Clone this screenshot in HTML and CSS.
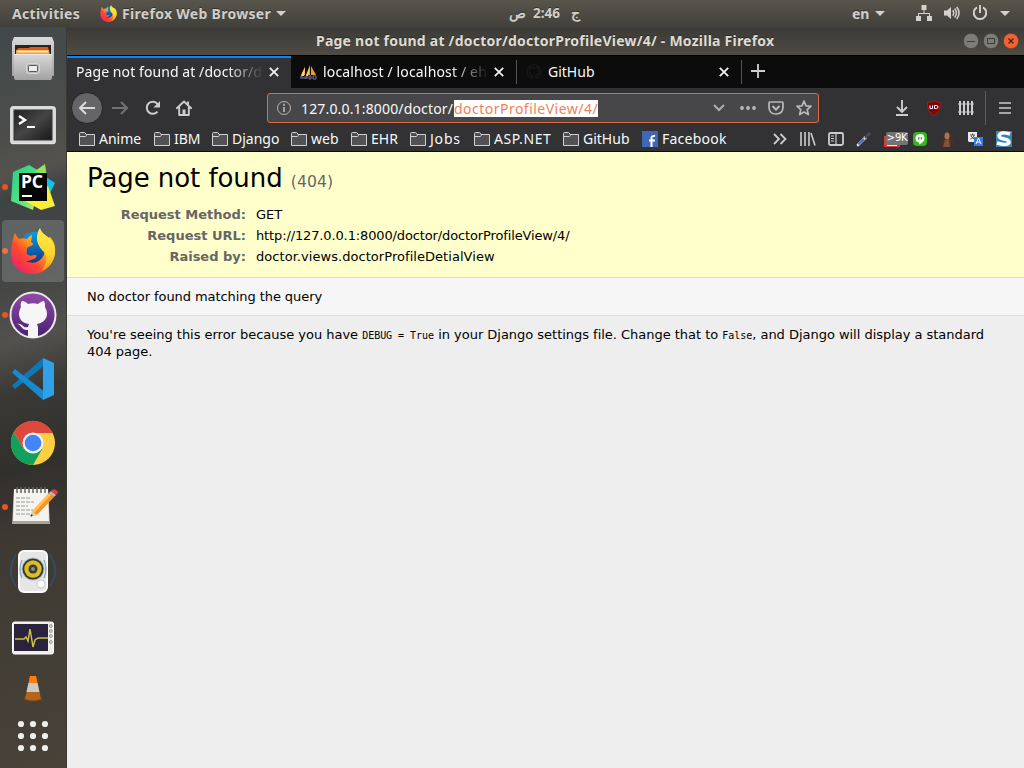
FILE: index.html
```html
<!DOCTYPE html>
<html lang="en">
<head>
<meta charset="utf-8">
<title>Page not found at /doctor/doctorProfileView/4/</title>
<link rel="stylesheet" href="styles.css">
</head>
<body>
<svg class="defs" width="0" height="0">
  <defs>
    <symbol id="folder" viewBox="0 0 16 16"><path d="M.5 14.500V2.500q0-1 1-1h4q1 0 1.500 2h8.500v11zM.5 5.500h6l1-1.500" fill="#525254" stroke="#d0d0d1"/></symbol>
    <symbol id="close" viewBox="0 0 10 10"><path d="M.8.8l8.400 8.400M9.200.8L.8 9.200" stroke="#f5f5f5" stroke-width="1.700" fill="none"/></symbol>
    <symbol id="caret" viewBox="0 0 10 5"><path d="M0 0h10L5 5z" fill="#d3d2ce"/></symbol>
    <linearGradient id="ffBody" x1="1" y1="0" x2="0" y2="1"><stop offset="0" stop-color="#ffe226"/><stop offset=".35" stop-color="#ffad18"/><stop offset=".6" stop-color="#ff4b2f"/><stop offset="1" stop-color="#e9107c"/></linearGradient>
    <linearGradient id="ffTail" x1="0" y1="0" x2="0" y2="1"><stop offset="0" stop-color="#fff04a"/><stop offset=".6" stop-color="#ffd52a"/><stop offset="1" stop-color="#ff9a1e"/></linearGradient>
    <linearGradient id="ffGlobe" x1="0" y1="0" x2="0" y2="1"><stop offset="0" stop-color="#079de8"/><stop offset="1" stop-color="#173386"/></linearGradient>
    <linearGradient id="metal" x1="0" y1="0" x2="0" y2="1"><stop offset="0" stop-color="#d9d9d9"/><stop offset="1" stop-color="#a2a2a2"/></linearGradient>
    <linearGradient id="screen" x1="0" y1="0" x2="1" y2="1"><stop offset="0" stop-color="#222"/><stop offset=".5" stop-color="#454545"/><stop offset="1" stop-color="#171717"/></linearGradient>
    <linearGradient id="ghBg" x1="0" y1="0" x2="0" y2="1"><stop offset="0" stop-color="#914ba8"/><stop offset="1" stop-color="#49216f"/></linearGradient>
    <linearGradient id="pcBg" x1="0" y1="0" x2="1" y2="1"><stop offset="0" stop-color="#20d18c"/><stop offset=".5" stop-color="#53df83"/><stop offset="1" stop-color="#e7f04c"/></linearGradient>
    <symbol id="firefox" viewBox="0 0 46 46">
      <circle cx="25" cy="20" r="16" fill="url(#ffGlobe)"/>
      <path d="M5 5c1 2 2 4 4 6 3-1 5-1 8 0 1-2 3-3 5-4 0 3-1 5-1 7 1 1 2 1 2 2 0 2-6 2-6 5 0 2-1 4 0 5 3 3 6 1 9 1 1 1 0 3-2 4-3 1-5 2-8 2 5 3 12 2 16-3 4-5 3-12 0-17l8-4c6 6 6 13 4 20-3 10-11 17-21 17C10 46 1 38 1 26 1 20 2 12 5 5z" fill="url(#ffBody)"/>
      <path d="M30 0c1 4 4 6 8 9 9 8 9 20 2 28-3 3-6 5-9 6 6-7 7-14 3-19-4-4-7-8-7-14 0-4 1-7 3-10z" fill="url(#ffTail)"/>
    </symbol>
  </defs>
</svg>
<div class="desktop">
  <header class="topbar">
    <span class="activities">Activities</span>
    <span class="app-menu"><svg width="17" height="17"><use href="#firefox"/></svg><b>Firefox Web Browser</b><svg class="car" width="10" height="5"><use href="#caret"/></svg></span>
    <span class="clock"><span>ص</span><span>2:46</span><span class="day">ج</span></span>
    <span class="lang">en</span><svg class="lang-car" width="10" height="5"><use href="#caret"/></svg>
    <span class="status">
      <svg width="16" height="16" viewBox="0 0 16 16" fill="#d3d2ce"><path d="M5.500 0h5v5h-5zM0 11h5v5H0zM11 11h5v5h-5zM7.500 5h1v3h5.500v3h-1V9H3v2H2V8h5.500z"/></svg>
      <svg width="16" height="16" viewBox="0 0 16 16"><path d="M0 5.500h3L7 2v12L3 10.500H0z" fill="#d3d2ce"/><path d="M8.700 5.300q2 2.700 0 5.400M10.700 3.500q3.500 4.500 0 9M12.700 2q4.700 6 0 12" fill="none" stroke="#d3d2ce" stroke-width="1.500"/></svg>
      <svg width="16" height="16" viewBox="0 0 16 16"><path d="M5 2.400a6.200 6.200 0 1 0 6 0M8 0v8" fill="none" stroke="#d3d2ce" stroke-width="1.900"/></svg>
      <svg width="10" height="5"><use href="#caret"/></svg>
    </span>
  </header>
  <div class="workspace">
    <nav class="dock">
      <div class="app"><svg width="46" height="46" viewBox="0 0 46 46"><path d="M4 1h38l2 5v34H2V6z" fill="url(#metal)"/><path d="M5 9h36v12H5z" fill="#282321"/><path d="M7 13l2-1h10l1-1h18l1 4v6H7z" fill="#d85b1c"/><path d="M6 14h33l1 7H6z" fill="#f3a848"/><path d="M8 15.500h30" stroke="#fff0d0" stroke-width="1.500"/><path d="M4 18h38v24q0 2-2 2H6q-2 0-2-2z" fill="url(#metal)"/><path d="M4 18.500h38" stroke="#e7e7e7"/><rect x="16.500" y="27.500" width="13" height="10" rx="2" fill="#b8b8b8" stroke="#d8d8d8"/><rect x="18.500" y="29.500" width="9" height="6" rx="1" fill="#eee" stroke="#555"/></svg></div>
      <div class="app terminal"><svg width="46" height="40" viewBox="0 0 46 40"><rect x=".7" y="1.700" width="44.600" height="37" rx="2" fill="#d8d8d8" stroke="#f1f1f1"/><rect x="4" y="5" width="38" height="30" fill="url(#screen)" stroke="#333"/><path d="M9 11l6 4-6 4" fill="none" stroke="#fff" stroke-width="2.400"/><path d="M17 22h8" stroke="#fff" stroke-width="2"/></svg></div>
      <div class="app running"><svg width="46" height="46" viewBox="0 0 46 46"><path d="M3 8l16-7 10 6 6-6 2 11-7 5-7 29L1 37z" fill="url(#pcBg)"/><path d="M36 13l9 6-8 16z" fill="#0fc1ed"/><path d="M25 7l10-7 1 12z" fill="#91e45b"/><path d="M15 37l23-15 7 20-14 4z" fill="#f7ef38"/><path d="M9 9h28v28H9z" fill="#050505"/><text x="11" y="24" class="pc">PC</text><path d="M12 32h10" stroke="#fff" stroke-width="2"/></svg></div>
      <div class="app running active"><svg width="46" height="46"><use href="#firefox"/></svg></div>
      <div class="app running"><svg width="48" height="48" viewBox="0 0 48 48"><circle cx="24" cy="24" r="22.500" fill="url(#ghBg)" stroke="#e8e8e8" stroke-width="2"/><path d="M19 46.300V39c-6 1-7-6-11-6 5-2 6 5 11 3l1-3c-7-1-10-5-10-10 0-3 1-5 2-7-1-2 0-5 1-6 3 0 5 2 6 3 3-1 7-1 10 0 1-1 4-3 6-3 1 1 1 4 1 6 1 2 2 4 2 7 0 5-4 9-10 10l1 3v10.300a22 22 0 0 1-10 0z" fill="#f5f5f5"/></svg></div>
      <div class="app"><svg width="44" height="44" viewBox="0 0 44 44"><path d="M32 1L1 28.500 4 32 34 8z" fill="#1077b7"/><path d="M4 12L1 15.500 32 43l2-8z" fill="#168bd1"/><path d="M32 1l11 5v32l-11 5z" fill="#30a0e8"/></svg></div>
      <div class="app"><svg width="46" height="46" viewBox="0 0 46 46"><circle cx="23" cy="23" r="22" fill="#ffce42"/><path d="M3.900 12A22 22 0 0 0 23 45l9.500-16.500L23 33 13.500 28.500z" fill="#12a05d"/><path d="M23 13h19.700A22 22 0 0 0 3.900 12l9.600 16.500z" fill="#dc483b"/><circle cx="23" cy="23" r="10.500" fill="#f1f1f1"/><circle cx="23" cy="23" r="8.300" fill="#4286f5"/></svg></div>
      <div class="app running"><svg class="notes" width="48" height="40" viewBox="0 0 48 40"><path d="M4 4h34l2 34H2z" fill="#aaa59b"/><path d="M4 3h34l1 32H3z" fill="#f3f3ef"/><path d="M7 1v6M11 1v6M15 1v6M19 1v6M23 1v6M27 1v6M31 1v6M35 1v6" stroke="#636363" stroke-width="1.500"/><path d="M6 12h14M6 16h18M6 20h12M6 24h17M6 28h14" stroke="#999" stroke-dasharray="4 1"/><path d="M22 26L39 7l5 4-17 18-6 1z" fill="#f39423"/><path d="M22 25L39 7l2 2-17 18z" fill="#ffc05d"/><path d="M21 30l1-5 5 4z" fill="#ddd0ab"/><path d="M39 7l2-2 5 4-2 2z" fill="#bbb"/><path d="M41 5q2-3 5-1t1 4l-1 1z" fill="#ee3941"/><circle cx="21.500" cy="29.500" r="1" fill="#222"/></svg></div>
      <div class="app"><svg width="50" height="46" viewBox="0 0 50 46"><path d="M8 7Q-2 23 8 38M42 7q10 16 0 31M5 12q-5 11 0 21M45 12q5 11 0 21" fill="none" stroke="#304f69" stroke-width="1.500"/><rect x="11" y="3" width="28" height="41" rx="5" fill="#e6e7e5" stroke="#fafafa" stroke-width="2"/><path d="M14 12q-4 9 0 18M36 12q4 9 0 18" fill="none" stroke="#8fb0cc" stroke-width="1.500"/><circle cx="25" cy="21" r="11.500" fill="#b8bec2"/><circle cx="25" cy="21" r="10.500" fill="#343429"/><circle cx="25" cy="21" r="8.700" fill="#d7bd28"/><circle cx="25" cy="21" r="4.500" fill="#3d3b2d"/><circle cx="25" cy="21" r="2" fill="#8b8b83"/><circle cx="33" cy="36" r="4" fill="#fff" stroke="#ccc"/></svg></div>
      <div class="app monitor"><svg width="42" height="34" viewBox="0 0 42 34"><rect x=".5" y="1" width="41" height="32" rx="2" fill="#eeedea" stroke="#fff"/><rect x="2" y="3" width="34" height="27" fill="#29233c"/><path d="M3 18h9l2-2 2 4 2-12 3 18 2-7 3-2h10" fill="none" stroke="#cbbf49" stroke-width="1.500"/><g fill="#ccc" stroke="#777" stroke-width=".6"><circle cx="38.800" cy="5" r="1.500"/><circle cx="38.800" cy="10" r="1.500"/><circle cx="38.800" cy="15" r="1.500"/><circle cx="38.800" cy="21" r="1.500"/></g></svg></div>
      <div class="app vlc"><svg width="22" height="28" viewBox="0 0 22 28"><path d="M4 20h14l3 5q-10 3-20 0z" fill="#714015"/><path d="M8 1h6l5 23q-8 3-16 0z" fill="#b4641b"/><path d="M8 1h6l1.500 8h-9z" fill="#ff7d08"/><path d="M6.500 8h9l2 9h-13z" fill="#c9cac8"/></svg></div>
      <div class="app grid"><svg width="32" height="32" viewBox="0 0 32 32" fill="#efefed"><circle cx="4" cy="4" r="3.100"/><circle cx="16" cy="4" r="3.100"/><circle cx="28" cy="4" r="3.100"/><circle cx="4" cy="16" r="3.100"/><circle cx="16" cy="16" r="3.100"/><circle cx="28" cy="16" r="3.100"/><circle cx="4" cy="28" r="3.100"/><circle cx="16" cy="28" r="3.100"/><circle cx="28" cy="28" r="3.100"/></svg></div>
    </nav>
    <main class="window">
      <div class="titlebar">
        <span class="title">Page not found at /doctor/doctorProfileView/4/ - Mozilla Firefox</span>
        <span class="controls">
          <svg width="16" height="16" viewBox="0 0 16 16"><circle cx="8" cy="8" r="7.700" fill="#7e7c76" stroke="#393834" stroke-width=".6"/><path d="M4 8.500h8" stroke="#3c3b37"/></svg>
          <svg width="16" height="16" viewBox="0 0 16 16"><circle cx="8" cy="8" r="7.700" fill="#7e7c76" stroke="#393834" stroke-width=".6"/><path d="M4.500 5.500h7v5h-7z" fill="none" stroke="#3c3b37"/></svg>
          <svg width="16" height="16" viewBox="0 0 16 16"><circle cx="8" cy="8" r="7.700" fill="#ee6236" stroke="#61301e" stroke-width=".6"/><path d="M5.500 5.500l5 5M10.500 5.500l-5 5" stroke="#442116" stroke-width="1.200"/></svg>
        </span>
      </div>
      <div class="tabs">
        <div class="tab selected"><span class="label">Page not found at /doctor/d</span><svg width="10" height="10"><use href="#close"/></svg></div>
        <div class="tab second"><svg class="favicon" width="17" height="16" viewBox="0 0 17 16"><path d="M1 11L5 3v8zM6 11L10 1v10zM11 11V2l5 9z" fill="#f39b23"/><path d="M1 12l4-9-1 9zM6 12l4-10-2 10z" fill="#fbd08a"/><path d="M1 12v3M1 13h2v2M5 12v3l2-3v3M9 12v3h2v-3zM13 12v3h3v-3z" fill="none" stroke="#77779e"/></svg><span class="label">localhost / localhost / eh</span><svg width="10" height="10"><use href="#close"/></svg></div>
        <div class="tab third"><svg class="favicon" width="16" height="16" viewBox="0 0 16 16"><path d="M6 14.500v-3q-3-1-3-4 0-1.500 1-2.500V3l2 1h4l2-1v2q1 1 1 2.500 0 3-3 4v3A7 7 0 1 0 6 14.500" fill="none" stroke="#1c1d1e"/></svg><span class="label">GitHub</span><svg width="10" height="10"><use href="#close"/></svg></div>
        <svg class="plus" width="14" height="14" viewBox="0 0 14 14"><path d="M7 0v14M0 7h14" stroke="#cfcfcf" stroke-width="1.800"/></svg>
      </div>
      <div class="navbar">
        <span class="back"><svg width="16" height="14" viewBox="0 0 16 14"><path d="M16 7H1M7 1L1 7l6 6" fill="none" stroke="#d9d9da" stroke-width="2"/></svg></span>
        <svg class="forward" width="16" height="14" viewBox="0 0 16 14"><path d="M0 7h15M9 1l6 6-6 6" fill="none" stroke="#707073" stroke-width="2"/></svg>
        <svg class="reload" width="16" height="16" viewBox="0 0 16 16"><path d="M12.500 11.500A6 6 0 1 1 12.500 4" fill="none" stroke="#ccccce" stroke-width="2"/><path d="M15 1v6.500H8.500z" fill="#ccccce"/></svg>
        <svg class="home" width="16" height="16" viewBox="0 0 16 16"><path d="M.8 8.200L8 1.500l7.200 6.700M3.200 7.500V15h9.600V7.500" fill="none" stroke="#ccccce" stroke-width="1.900" stroke-linejoin="round" stroke-linecap="round"/><path d="M11 1.500h2v4l-2-2zM6.500 9.500h3V15h-3z" fill="#ccccce"/></svg>
        <div class="urlbar">
          <svg width="16" height="16" viewBox="0 0 16 16"><circle cx="8" cy="8" r="6.500" fill="none" stroke="#b5b5b7"/><path d="M8 3.800v2M8 7v5" stroke="#b5b5b7" stroke-width="1.700"/></svg>
          <span class="url">127.0.0.1:8000/doctor/</span><span class="selection">doctorProfileView/4/</span>
          <span class="url-tools">
            <svg width="12" height="8" viewBox="0 0 12 8"><path d="M1 1l5 5 5-5" fill="none" stroke="#afafb1" stroke-width="2"/></svg>
            <svg width="16" height="4" viewBox="0 0 16 4" fill="#b9b9bb"><circle cx="2" cy="2" r="1.900"/><circle cx="8" cy="2" r="1.900"/><circle cx="14" cy="2" r="1.900"/></svg>
            <svg width="16" height="14" viewBox="0 0 16 14"><path d="M1 2q0-1 1-1h12q1 0 1 1v4q0 7-7 7T1 6z" fill="none" stroke="#b9b9bb" stroke-width="1.700"/><path d="M4.500 5L8 8.500 11.500 5" fill="none" stroke="#b9b9bb" stroke-width="2"/></svg>
            <svg width="16" height="16" viewBox="0 0 16 16"><path d="M8 1l2 4.800 5 .4-3.800 3.400 1.200 5L8 12l-4.400 2.600 1.200-5L1 6.200l5-.4z" fill="none" stroke="#b9b9bb" stroke-width="1.700" stroke-linejoin="round"/></svg>
          </span>
        </div>
        <div class="extensions">
          <svg width="12" height="16" viewBox="0 0 12 16"><path d="M6 0v12M1 7l5 5 5-5M0 15h12" fill="none" stroke="#ccccce" stroke-width="1.900"/></svg>
          <svg class="ublock" width="14" height="16" viewBox="0 0 14 16"><path d="M7 .5q3 2 6.500 2Q14 12 7 15.500 0 12 .5 2.500 4 2.500 7 .5z" fill="#850005" stroke="#ac3134" stroke-width=".6"/><path d="M3 5.500v3h2.500v-3M7.500 5.500h2q1.500 0 1.500 1.500T9.500 8.500h-2z" fill="none" stroke="#fff"/></svg>
          <svg width="16" height="14" viewBox="0 0 16 14"><path d="M2 0v14M6 0v14M10 0v14M14 0v14" stroke="#ccccce" stroke-width="2"/><path d="M0 3h16M0 11h16" stroke="#ccccce" stroke-width="1.200"/></svg>
        </div>
        <svg class="menu" width="12" height="12" viewBox="0 0 12 12"><path d="M0 1h12M0 6h12M0 11h12" stroke="#ccccce" stroke-width="1.700"/></svg>
      </div>
      <div class="bookmarks">
        <span><svg width="16" height="16"><use href="#folder"/></svg>Anime</span><span><svg width="16" height="16"><use href="#folder"/></svg>IBM</span><span><svg width="16" height="16"><use href="#folder"/></svg>Django</span><span><svg width="16" height="16"><use href="#folder"/></svg>web</span><span><svg width="16" height="16"><use href="#folder"/></svg>EHR</span><span class="jobs"><svg width="16" height="16"><use href="#folder"/></svg>Jobs</span><span class="asp"><svg width="16" height="16"><use href="#folder"/></svg>ASP.NET</span><span><svg width="16" height="16"><use href="#folder"/></svg>GitHub</span>
        <span class="fb"><svg width="16" height="16" viewBox="0 0 16 16"><path d="M0 0h16v16H0z" fill="#4267b2"/><path d="M9.500 16V7q0-2.500 3.500-2M7 9.500h6" fill="none" stroke="#fff" stroke-width="2"/></svg>Facebook</span>
        <span class="shelf">
          <svg width="14" height="12" viewBox="0 0 14 12"><path d="M1 1l5 5-5 5M7.500 1l5 5-5 5" fill="none" stroke="#ccccce" stroke-width="1.800"/></svg>
          <svg width="16" height="14" viewBox="0 0 16 14"><path d="M1 0v14M5 0v14M9 0v14M11 1l4 12.500" fill="none" stroke="#ccccce" stroke-width="1.600"/></svg>
          <svg width="16" height="14" viewBox="0 0 16 14"><rect x="1" y="1" width="14" height="12" rx="1.500" fill="none" stroke="#ccccce" stroke-width="1.800"/><path d="M8 1v12M3 4h3M3 6.500h3M3 9h3" stroke="#ccccce" stroke-width="1.200"/></svg>
          <svg width="16" height="16" viewBox="0 0 16 16"><path d="M2 14l7-7" stroke="#e7eaff" stroke-width="2.600" stroke-linecap="round"/><path d="M2.500 13.500L8 8" stroke="#3c62dc" stroke-width="1.800"/><path d="M8 5.500l2.500 2.500" stroke="#ccc" stroke-width="1.500"/><path d="M10 6l3.500-3.500" stroke="#4a4a50" stroke-width="3" stroke-linecap="round"/></svg>
          <span class="mail"><i></i><em>&gt;9K</em></span>
          <svg width="14" height="14" viewBox="0 0 14 14"><rect width="14" height="14" rx="4" fill="#30b817"/><path d="M6 12.500v-2Q2.500 10 2.500 6.200T7 2t4.500 4.200Q11.500 10 6 12.500z" fill="#fff"/><path d="M5 5.200h1.500V7L5 8zM7.700 5.200h1.500V7l-1.500 1z" fill="#30b817"/></svg>
          <svg width="14" height="16" viewBox="0 0 14 16"><path d="M5 1q6-2 7 5l2 7-3 3H1L0 12l3-4z" fill="#493022"/><ellipse cx="7" cy="5" rx="2.500" ry="3.500" fill="#a77357"/><path d="M5 9l4-1 1 8H3z" fill="#80513b"/></svg>
          <svg width="15" height="15" viewBox="0 0 15 15"><path d="M0 0h9v10H1L0 9z" fill="#eaeaea"/><path d="M2 3h5M4.500 1.500V3M2.500 7Q6 6 6 3M3 4l4 4" fill="none" stroke="#555"/><path d="M6 5h9v9H6z" fill="#3979ed"/><path d="M8 12l2.500-6 2.500 6M9 10h3" fill="none" stroke="#fff"/></svg>
          <svg width="16" height="16" viewBox="0 0 16 16"><path d="M0 0h16v16H0z" fill="#3784b8"/><path d="M14 3Q4 0 3 5c0 4 10 2 10 6 0 3-6 3-12 1" fill="none" stroke="#fff" stroke-width="3.500"/></svg>
        </span>
      </div>
      <div class="page">
        <section class="summary">
          <h1>Page not found <span>(404)</span></h1>
          <table>
            <tr><th>Request Method:</th><td>GET</td></tr>
            <tr><th>Request URL:</th><td class="request-url">http://127.0.0.1:8000/doctor/doctorProfileView/4/</td></tr>
            <tr><th>Raised by:</th><td class="raised">doctor.views.doctorProfileDetialView</td></tr>
          </table>
        </section>
        <section class="info">No doctor found matching the query</section>
        <section class="explanation">You're seeing this error because you have <code>DEBUG = True</code> in your Django settings file. Change that to <code>False</code>, and Django will display a standard 404 page.</section>
      </div>
    </main>
  </div>
</div>
</body>
</html>
```
FILE: styles.css
```css
* { box-sizing: border-box; }
body { margin: 0; font-family: "Noto Sans", "Open Sans", sans-serif; font-size: 14px; color: #f9f9fa; }
svg { display: block; flex: none; }
.defs { position: absolute; }
.desktop { width: 1024px; height: 768px; overflow: hidden; display: flex; flex-direction: column; background: #3c3b37; }

.topbar { height: 28px; flex: none; display: flex; align-items: center; padding-bottom: 2px; background: linear-gradient(#58554c, #403f3a); color: #d0cec7; font-weight: 700; white-space: nowrap; text-shadow: 0 -1px #33322e; }
.activities { width: 88px; padding-left: 12px; letter-spacing: .3px; }
.app-menu { width: 421px; display: flex; align-items: center; padding-left: 12px; }
.app-menu b { width: 149px; margin: 0 5px; font-weight: 700; letter-spacing: .3px; }
.clock { width: 343px; display: flex; gap: 7px; font-size: 13.500px; }
.day { margin-left: 4px; }
.lang { width: 17px; }
.lang-car { margin: 0 31px 0 6px; }
.status { display: flex; align-items: center; gap: 12px; }

.workspace { flex: 1; min-height: 0; display: flex; }
.dock { width: 67px; flex: none; margin-top: -1px; background: linear-gradient(165deg, #42484a 0, #4b4d4b 14%, #54524d 20%, #3e4344 23%, #444644 34%, #52514e 42%, #3a3835 49%, #32302d 59%, #3e3a33 69%, #484239 100%); border-right: 1px solid #3b3935; }
.app { height: 64px; display: flex; align-items: center; justify-content: center; position: relative; }
.running::before { content: ""; position: absolute; left: 2px; top: 29px; width: 6px; height: 6px; border-radius: 50%; background: #e95420; }
.active::after { content: ""; position: absolute; left: 2px; top: 1px; width: 62px; height: 62px; border-radius: 4px; background: #ffffff2b; }
.active svg { z-index: 1; }
.terminal { padding-top: 3px; }
.notes { margin: -3px 0 0 1px; }
.monitor { padding-top: 5px; }
.pc { font: 700 17.500px "Noto Sans", sans-serif; fill: #fff; }
.vlc { height: 42px; padding-top: 2px; }
.grid { height: 52px; padding-top: 2px; }

.window { flex: 1; min-width: 0; display: flex; flex-direction: column; }
.titlebar { height: 27px; flex: none; display: grid; grid-template-columns: 1fr 56px; align-items: center; padding: 0 5px 2px 0; background: linear-gradient(#3b3a36, #4f4c44); color: #dfdbd2; }
.title { padding-left: 249px; font-weight: 700; letter-spacing: .23px; white-space: nowrap; text-shadow: 0 -1px #2d2c29; }
.controls { display: flex; gap: 4px; }

.tabs { height: 33px; flex: none; display: flex; background: #0c0c0d; border-top: 1px solid #000; }
.tab { width: 225px; display: flex; align-items: center; padding: 0 12px 2px 9px; border-right: 1px solid #0c0c0d; }
.tab.selected { width: 224px; background: #323234; border-top: 2px solid #0a84ff; border-right: 0; padding-bottom: 4px; }
.tab .label { flex: 1; min-width: 0; white-space: nowrap; overflow: hidden; margin-right: 5px; }
.tab > svg { margin-top: 1px; }
.selected .label, .second .label { -webkit-mask-image: linear-gradient(90deg, #000 calc(100% - 38px), transparent 100%); mask-image: linear-gradient(90deg, #000 calc(100% - 38px), transparent 100%); }
.selected .label { letter-spacing: .08px; }
.favicon { margin-right: 6px; }
.tab.second, .tab.third { border-image: linear-gradient(transparent 15%, #555 15%, #555 85%, transparent 85%) 1; border-width: 0 1px 0 0; }
.tab.second { width: 226px; }
.second .label { letter-spacing: .16px; }
.plus { margin: 8px 0 0 9px; }

.navbar { height: 40px; flex: none; display: flex; align-items: center; padding-left: 4px; background: #323234; }
.back { width: 32px; height: 32px; border-radius: 50%; background: #656567; border: 1px solid #242425; display: flex; align-items: center; justify-content: center; }
.forward { margin-left: 9px; }
.reload { margin-left: 17px; }
.home { margin: 0 75px 0 15px; }
.urlbar { width: 552px; height: 30px; border: 1px solid #de6b45; border-radius: 3px; background: #474749; display: flex; align-items: center; padding: 0 6px 0 8px; white-space: nowrap; }
.url { width: 153px; margin-left: 9px; letter-spacing: .16px; }
.selection { width: 144px; height: 17px; line-height: 17px; background: #fff; color: #ef8158; letter-spacing: .48px; }
.url-tools { margin-left: auto; display: flex; align-items: center; gap: 12px; }
.url-tools svg:nth-child(1) { margin-right: 3px; }
.extensions { display: flex; align-items: center; padding-left: 77px; width: 167px; height: 34px; border-right: 1px solid #5e5e60; }
.ublock { margin: 0 17px 0 19px; }
.menu { margin-left: 13px; }

.bookmarks { height: 24px; flex: none; display: grid; grid-template-columns: 75px 58px 79px 60px 59px 64px 89px 79px 131px 1fr; align-items: center; padding: 0 11px 3px 12px; background: #323234; border-bottom: 1px solid #0c0c0d; white-space: nowrap; }
.bookmarks > span { display: flex; align-items: center; gap: 4px; }
.bookmarks .asp { letter-spacing: .6px; }
.bookmarks .jobs { letter-spacing: .8px; }
.bookmarks .fb { letter-spacing: .25px; }
.bookmarks > span > svg { margin-top: 2px; }
.bookmarks > .shelf { gap: 12px; }
.shelf svg:nth-child(1) { margin-right: 1px; }
.mail { width: 24px; height: 16px; margin: 3px -7px 0 0; position: relative; }
.shelf svg:nth-child(6), .shelf svg:nth-child(8) { margin-right: 1px; }
.shelf svg:nth-child(7) { margin-right: 2px; }
.mail i { position: absolute; left: 0; top: 4px; width: 16px; height: 11px; background: #e5e5e5; border: solid #e33336; border-width: 0 3px 1px; }
.mail em { position: absolute; left: 2px; top: 0; width: 22px; height: 13px; border-radius: 2px; background: #737373; font: 10px/12px "DejaVu Sans", sans-serif; letter-spacing: -.3px; text-align: center; color: #fff; }

.page { flex: 1; background: #eee; color: #000; font: 13px/16px "DejaVu Sans", sans-serif; }
.summary { height: 126px; padding: 11px 20px; background: #ffc; border-bottom: 1px solid #ddd; }
h1 { margin: 0 0 7px; font-size: 26px; line-height: 31px; font-weight: 400; letter-spacing: -.07px; }
h1 span { color: #666; font-size: 15.600px; letter-spacing: .1px; }
table { border-collapse: collapse; }
th { width: 159px; padding: 2px 0 3px; text-align: right; color: #666; font-weight: 700; }
td { padding: 2px 0 3px 10px; }
.request-url { letter-spacing: -.13px; }
.raised { letter-spacing: .05px; }
.info { height: 38px; padding: 11px 20px; background: #f6f6f6; border-bottom: 1px solid #ddd; letter-spacing: -.07px; }
.explanation { padding: 10px 20px; line-height: 17px; letter-spacing: -.025px; }
code { font: 10px "DejaVu Sans Mono", monospace; }
```
